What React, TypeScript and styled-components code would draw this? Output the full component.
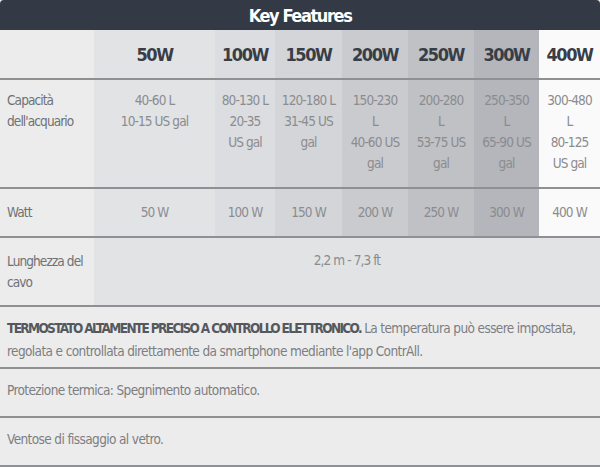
import React from "react";
import styled, { createGlobalStyle } from "styled-components";

const Global = createGlobalStyle`
  html, body { margin: 0; padding: 0; background: #ffffff; }
  body { font-family: "DejaVu Sans Condensed", "DejaVu Sans", sans-serif; font-stretch: condensed; }
`;

const Wrap = styled.div`
  width: 600px;
  height: 467px;
  overflow: hidden;
  background: #ececec;
`;

const TitleBar = styled.div`
  height: 30px;
  background: #343a45;
  color: #ffffff;
  display: flex;
  align-items: center;
  justify-content: center;
  font-weight: 700;
  font-size: 18px;
  letter-spacing: -1.4px;
  border-radius: 4px 4px 0 0;
`;

const Grid = styled.div`
  display: grid;
  grid-template-columns: 94px 121px 60px 67px 66px 66px 65px 61px;
  grid-template-rows: 50px 109px 49px 69px;
`;

const shades = ["#ececec", "#e2e3e5", "#dcdde0", "#d4d5d8", "#cacbce", "#c0c1c5", "#b4b6bb", "#fafafa"];

const Cell = styled.div<{
  $col: number;
  $span?: number;
  $head?: boolean;
  $label?: boolean;
  $mid?: boolean;
  $top?: number;
}>`
  background: ${(p) => shades[p.$col]};
  grid-column: ${(p) => (p.$span ? `span ${p.$span}` : "auto")};
  border-bottom: 2px solid #8e9094;
  box-sizing: border-box;
  display: flex;
  flex-direction: column;
  align-items: ${(p) => (p.$label ? "flex-start" : "center")};
  justify-content: ${(p) => (p.$head || p.$mid ? "center" : "flex-start")};
  text-align: ${(p) => (p.$label ? "left" : "center")};
  padding-top: ${(p) => (p.$head || p.$mid ? 0 : p.$top ?? 10)}px;
  padding-left: ${(p) => (p.$label ? 7 : 0)}px;
  padding-right: ${(p) => (p.$label ? 4 : 0)}px;
  color: ${(p) => (p.$head ? "#383d46" : p.$label ? "#6f7175" : "#8a8c90")};
  font-size: ${(p) => (p.$head ? "18px" : "13.5px")};
  letter-spacing: ${(p) => (p.$head ? "-1.4px" : "-0.9px")};
  font-weight: ${(p) => (p.$head ? 700 : 400)};
  line-height: 21px;
  white-space: nowrap;
`;

const Line = styled.span`
  display: block;
`;

const Note = styled.div<{ $h: number }>`
  height: ${(p) => p.$h}px;
  box-sizing: border-box;
  border-bottom: 2px solid #8e9094;
  padding: 10px 7px 0;
  font-size: 13.5px;
  letter-spacing: -0.62px;
  line-height: 23px;
  color: #7c7e82;
  overflow: hidden;
`;

const Strong = styled.b`
  color: #55585d;
  font-weight: 700;
  letter-spacing: -1.65px;
`;

const heads = ["50W", "100W", "150W", "200W", "250W", "300W", "400W"];
const caps: string[][] = [
  ["40-60 L", "10-15 US gal"],
  ["80-130 L", "20-35", "US gal"],
  ["120-180 L", "31-45 US", "gal"],
  ["150-230", "L", "40-60 US", "gal"],
  ["200-280", "L", "53-75 US", "gal"],
  ["250-350", "L", "65-90 US", "gal"],
  ["300-480", "L", "80-125", "US gal"],
];
const watts = ["50 W", "100 W", "150 W", "200 W", "250 W", "300 W", "400 W"];

export default function App() {
  return (
    <>
      <Global />
      <Wrap>
        <TitleBar>Key Features</TitleBar>
        <Grid>
          <Cell $col={0} $head />
          {heads.map((h, i) => (
            <Cell key={h} $col={i + 1} $head>
              {h}
            </Cell>
          ))}
          <Cell $col={0} $label>
            <Line>Capacità</Line>
            <Line>dell'acquario</Line>
          </Cell>
          {caps.map((lines, i) => (
            <Cell key={i} $col={i + 1}>
              {lines.map((l, j) => (
                <Line key={j}>{l}</Line>
              ))}
            </Cell>
          ))}
          <Cell $col={0} $label $mid>
            Watt
          </Cell>
          {watts.map((w, i) => (
            <Cell key={w} $col={i + 1} $mid>
              {w}
            </Cell>
          ))}
          <Cell $col={0} $label $top={13}>
            <Line>Lunghezza del</Line>
            <Line>cavo</Line>
          </Cell>
          <Cell $col={1} $span={7} $top={12}>
            2,2 m - 7,3 ft
          </Cell>
        </Grid>
        <Note $h={62}>
          <Strong>TERMOSTATO ALTAMENTE PRECISO A CONTROLLO ELETTRONICO.</Strong> La temperatura può essere impostata,
          regolata e controllata direttamente da smartphone mediante l'app ContrAll.
        </Note>
        <Note $h={49}>Protezione termica: Spegnimento automatico.</Note>
        <Note $h={49}>Ventose di fissaggio al vetro.</Note>
      </Wrap>
    </>
  );
}
